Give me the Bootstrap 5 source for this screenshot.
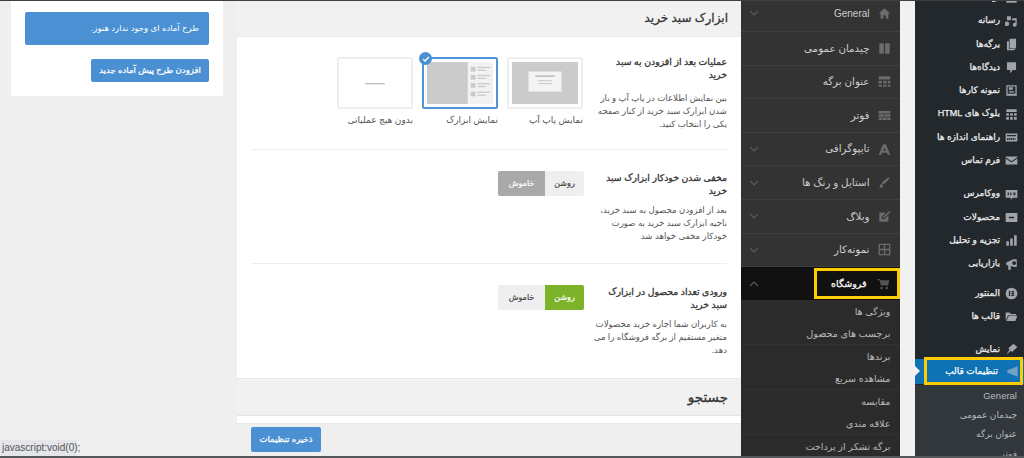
<!DOCTYPE html>
<html lang="fa" dir="rtl">
<head>
<meta charset="utf-8">
<title>تنظیمات قالب</title>
<link href="https://cdn.jsdelivr.net/npm/bootstrap@5.3.0/dist/css/bootstrap.min.css" rel="stylesheet">
<style>
html,body{height:458px;overflow:hidden}
body{font-family:"Liberation Sans","DejaVu Sans",sans-serif;background:#3c4043;font-size:10px;color:#555;position:relative}
.shell{height:455px;margin-top:1px;overflow:hidden}
.adm{width:109px;background:#23282d;flex:none;height:455px;overflow:hidden}
.adm-i{height:23.3px;padding-right:6px;gap:5px;color:#eee;font-size:9px;-webkit-text-stroke:.25px #eee;white-space:nowrap}
.adm-i svg{width:13px;height:13px;flex:none;fill:#a0a5aa}
.adm-cut{height:8.4px;overflow:hidden;padding-bottom:5px;color:#ccc}
.tight{height:22px}
.g1{margin-top:10px}.g2{margin-top:7px}.g3{margin-top:10px}
.adm-cur{height:28px;background:linear-gradient(#23282d 2px,#0e72b5 2px,#0e72b5 27px,#23282d 27px);position:relative;margin-top:-4.7px}
.adm-box{margin:0 1px 0 9px;width:99px;height:28px;border:3px solid #fc0;padding:2px 1px 0 0;gap:8px;color:#fff;font-size:9px;-webkit-text-stroke:.25px #fff;white-space:nowrap}
.adm-box svg{width:13px;height:13px;fill:#6fa3c5;flex:none}
.adm-arrow{position:absolute;left:0;top:9px;width:0;height:0;border-left:5px solid #f1f1f1;border-top:5px solid transparent;border-bottom:5px solid transparent}
.adm-sub{background:#32373c;padding-right:7px;color:#b4b9be;font-size:9px}
.adm-sub div{height:19.5px;line-height:19.5px;white-space:nowrap}
.adm-sub .en{font-size:9.5px;height:21px;line-height:21px}
.gapcol{width:15.5px;flex:none;background:#f1f1f1}
.opt{width:158.5px;flex:none;background:#333;height:455px;overflow:hidden}
.opt-i{height:33.6px;border-bottom:1px solid #3e3e3e;padding:0 9px;color:#ccc;font-size:10.3px;white-space:nowrap;gap:8px}
.opt-i.first{height:31px;padding-bottom:6px}
.opt-i svg{width:13px;height:13px;fill:#6b6b6b;flex:none}
.opt-en{font-size:10px}
.chev{margin-right:auto;width:8px!important;height:6px!important;fill:none!important;stroke:#5c5c5c;stroke-width:1.2}
.opt-act{height:33px;background:#111;padding:0 0 0 9px;color:#fff;font-size:9.5px;-webkit-text-stroke:.25px #fff}
.opt-box{width:86px;height:31px;border:3px solid #fc0;padding-right:7px;gap:10px;white-space:nowrap;background:#111}
.opt-box svg{width:13px;height:13px;fill:#555;flex:none}
.opt-sub{background:#2b2b2b;color:#b9b9b9;font-size:9.6px;height:23px;line-height:23px;padding-right:9px;border-bottom:1px solid #333;white-space:nowrap;margin-top:-.5px}
.mid{width:504px;flex:none;background:#f1f1f1;height:455px;overflow:hidden}
.h-tl{height:36px;padding:0 13px;font-size:12px;-webkit-text-stroke:.3px #333;color:#333;line-height:35px;border-bottom:1px solid #eaeaea}
.sheet{background:#fff}
.setrow{margin:0 14px;border-bottom:1px solid #eee;height:114px;padding-top:22px;gap:26px}
.setrow.r1{height:113px;padding-top:19px}
.setrow.r1 .ttl{margin-bottom:11px}
.setrow.r3{border:0}
.tcol{width:117px;flex:none}
.ttl{font-size:9.3px;-webkit-text-stroke:.3px #333;color:#333;line-height:12.5px;margin-bottom:7px;white-space:nowrap}
.dsc{font-size:8.6px;line-height:13px;color:#555;white-space:nowrap}
.picks{gap:9px;margin:1px 1px 0 0}
.pick{width:76px;color:#555;font-size:9px;white-space:nowrap}
.pth{height:52px;border:2px solid #eee;border-radius:2px;padding:3px;position:relative;margin-bottom:5px;background:#fff}
.pth.on{border-color:#4f94d4}
.pth svg{display:block;width:100%;height:100%}
.tick{position:absolute;top:-7px;left:-5px;width:13px;height:13px;border-radius:50%;background:#4a90d2;display:flex;align-items:center;justify-content:center}
.tick svg{width:8px;height:8px}
.tog{width:86px;height:25px;border-radius:2px;overflow:hidden;background:#efefef;font-size:8px;-webkit-text-stroke:.2px;color:#444;margin-top:-1px}
.tog span{display:flex;align-items:center;justify-content:center;height:100%}
.tog .s1{width:39px}.tog .s2{width:47px}
.tog .off{background:#a9a9a9;color:#fff}
.tog .grn{background:#7cb32b;color:#fff}
.srch{height:38px;line-height:37px;padding:0 13px;font-size:13.5px;-webkit-text-stroke:.3px #333;color:#333;border-top:1px solid #e8e8e8;border-bottom:1px solid #e5e5e5}
.strip{height:7px;background:#fff}
.foot{height:34px;background:#efefef;padding:3px 14px 0;border-top:1px solid #e7e7e7}
.bluebtn{background:#4a90d2;border:0;color:#fff;-webkit-text-stroke:.25px #fff;border-radius:2px;font-size:8.5px;padding:0;line-height:1;display:flex;align-items:center;justify-content:center;white-space:nowrap}
.bluebtn:hover{background:#4a90d2;color:#fff}
.sv{width:70px;height:25px}
.lft{width:237px;flex:none;background:#efefef;height:455px}
.lcard{background:#fff;height:95px;width:212px;padding:11px 14px 0;margin-right:14px}
.lnote{background:#4a90d2;color:#fff;height:33px;border-radius:2px;padding:0 10px;font-size:8.5px;line-height:33px;white-space:nowrap}
.ladd{width:118px;height:23px;margin-top:14px}
.stat{position:absolute;left:0;bottom:2px;height:16px;width:77px;background:#e4e6e9;border-top-right-radius:3px;font:10px/16px "Liberation Sans",sans-serif;color:#555;padding-left:2px;direction:ltr;white-space:nowrap}
.lowbar{position:absolute;left:0;right:0;bottom:0;height:2px;background:#55585a}
</style>
</head>
<body>
<div class="shell d-flex">
  <nav class="adm">
    <div class="adm-i adm-cut d-flex align-items-end"><svg viewBox="0 0 20 20"><rect x="2" y="4" width="16" height="14"/></svg><span>نوشته‌ها</span></div>
    <div class="adm-i d-flex align-items-center"><svg viewBox="0 0 20 20"><path d="M3 2h6v6H3zM3 10a3 3 0 1 1 0 7 3 3 0 0 1 0-7zM11 5h7v10a3 3 0 1 1-3-3h1V8h-5z"/></svg><span>رسانه</span></div>
    <div class="adm-i d-flex align-items-center"><svg viewBox="0 0 20 20"><path d="M7 1h10v15H7zM3 5h3v12h9v2H3z"/></svg><span>برگه‌ها</span></div>
    <div class="adm-i d-flex align-items-center"><svg viewBox="0 0 20 20"><path d="M3 2h14v12h-5l-4 5v-5H3z"/></svg><span>دیدگاه‌ها</span></div>
    <div class="adm-i d-flex align-items-center"><svg viewBox="0 0 20 20"><path fill-rule="evenodd" d="M2 2h16v16H2zM4 4v11h12V4zM6 5h6v4H6zM6 11h8v2H6z"/></svg><span>نمونه کارها</span></div>
    <div class="adm-i d-flex align-items-center"><svg viewBox="0 0 20 20"><path d="M2 2h16v4H2zM2 8h4v4H2zM8 8h4v4H8zM14 8h4v4h-4zM2 14h4v4H2zM8 14h4v4H8zM14 14h4v4h-4z"/></svg><span>بلوک های HTML</span></div>
    <div class="adm-i d-flex align-items-center"><svg viewBox="0 0 20 20"><path fill-rule="evenodd" d="M1 4h18v12H1zM3 6v2h14V6zM3 11v3h2v-2h1v2h2v-2h1v2h2v-2h1v2h2v-2h1v2h1v-3z"/></svg><span>راهنمای اندازه ها</span></div>
    <div class="adm-i d-flex align-items-center"><svg viewBox="0 0 20 20"><path d="M1 4h18v1l-9 6-9-6zM1 7l9 6 9-6v9H1z"/></svg><span>فرم تماس</span></div>
    <div class="adm-i g1 d-flex align-items-center"><svg viewBox="0 0 20 20"><path fill-rule="evenodd" d="M1 3h18v12h-7l-3 3v-3H1zM4 7v4h2V7zM8 7v4h2V7zM13 7v4h3V7z"/></svg><span>ووکامرس</span></div>
    <div class="adm-i d-flex align-items-center"><svg viewBox="0 0 20 20"><path fill-rule="evenodd" d="M1 3h18v14H1zM6 9v2h8V9z"/></svg><span>محصولات</span></div>
    <div class="adm-i d-flex align-items-center"><svg viewBox="0 0 20 20"><path d="M2 11h4v7H2zM8 7h4v11H8zM14 2h4v16h-4z"/></svg><span>تجزیه و تحلیل</span></div>
    <div class="adm-i d-flex align-items-center"><svg viewBox="0 0 20 20"><path fill-rule="evenodd" d="M2 7l11-5h5v12h-5l-4-2v6H5v-7H2zM13 5a3 3 0 1 0 2 0z"/></svg><span>بازاریابی</span></div>
    <div class="adm-i tight g2 d-flex align-items-center"><svg viewBox="0 0 20 20"><path fill-rule="evenodd" d="M10 1a9 9 0 1 1 0 18 9 9 0 0 1 0-18zM6 6v8h2V6zM10 6v2h4V6zM10 9v2h4V9zM10 12v2h4v-2z"/></svg><span>المنتور</span></div>
    <div class="adm-i d-flex align-items-center"><svg viewBox="0 0 20 20"><path d="M1 4h6l2 2h8v2H5l-4 8zM6 9h13l-3 8H2z"/></svg><span>قالب ها</span></div>
    <div class="adm-i g3 d-flex align-items-center"><svg viewBox="0 0 20 20"><path d="M13 1l6 5-8 8-2-2-7 6 5-8-2-2z"/></svg><span>نمایش</span></div>
    <div class="adm-cur"><i class="adm-arrow"></i>
      <div class="adm-box d-flex align-items-center"><svg viewBox="0 0 20 20"><path d="M2 8l16-6v16L2 12z"/></svg><span>تنظیمات قالب</span></div>
    </div>
    <div class="adm-sub">
      <div class="en">General</div>
      <div>چیدمان عمومی</div>
      <div>عنوان برگه</div>
      <div>فوتر</div>
    </div>
  </nav>
  <div class="gapcol"></div>
  <aside class="opt">
    <div class="opt-i first d-flex align-items-center"><svg viewBox="0 0 20 20"><path d="M10 2l9 8h-3v8h-4v-5H8v5H4v-8H1z"/></svg><span class="opt-en">General</span><svg class="chev" viewBox="0 0 8 6"><path d="M0 1l4 4 4-4"/></svg></div>
    <div class="opt-i d-flex align-items-center"><svg viewBox="0 0 20 20"><path d="M2 2h7v16H2zM11 2h7v16h-7z"/></svg><span>چیدمان عمومی</span></div>
    <div class="opt-i d-flex align-items-center"><svg viewBox="0 0 20 20"><path d="M1 2h18v5H1zM1 9h5v4H1zM8 9h5v4H8zM15 9h4v4h-4zM1 15h5v3H1zM8 15h5v3H8zM15 15h4v3h-4z"/></svg><span>عنوان برگه</span></div>
    <div class="opt-i d-flex align-items-center"><svg viewBox="0 0 20 20"><path d="M1 3h18v4H1zM1 8h8v4H1zM10 8h9v4h-9zM1 13h5v4H1zM7 13h6v4H7zM14 13h5v4h-5z"/></svg><span>فوتر</span></div>
    <div class="opt-i d-flex align-items-center"><svg viewBox="0 0 20 20"><path fill-rule="evenodd" d="M8 2h4l7 16h-4l-1-3H6l-1 3H1zM10 7l-2 5h4z"/></svg><span>تایپوگرافی</span><svg class="chev" viewBox="0 0 8 6"><path d="M0 1l4 4 4-4"/></svg></div>
    <div class="opt-i d-flex align-items-center"><svg viewBox="0 0 20 20"><path d="M18 2c-1 4-6 9-10 11l-2-2c2-4 8-8 12-9zM5 12l3 3c-1 3-4 3-6 3 1-1 1-5 3-6z"/></svg><span>استایل و رنگ ها</span><svg class="chev" viewBox="0 0 8 6"><path d="M0 1l4 4 4-4"/></svg></div>
    <div class="opt-i d-flex align-items-center"><svg viewBox="0 0 20 20"><path d="M2 4h10l-6 6v4h4l6-6v10H2zM18 1l1 2-9 9H8v-2z"/></svg><span>وبلاگ</span><svg class="chev" viewBox="0 0 8 6"><path d="M0 1l4 4 4-4"/></svg></div>
    <div class="opt-i d-flex align-items-center"><svg viewBox="0 0 20 20"><path fill-rule="evenodd" d="M1 1h18v18H1zM3 3v6h6V3zM11 3v6h6V3zM3 11v6h6v-6zM11 11v6h6v-6z"/></svg><span>نمونه‌کار</span><svg class="chev" viewBox="0 0 8 6"><path d="M0 1l4 4 4-4"/></svg></div>
    <div class="opt-act d-flex align-items-center">
      <div class="opt-box d-flex align-items-center"><svg viewBox="0 0 20 20"><path d="M1 3h3l1 2h14l-2 8H6L4 5H1zM7 15a2 2 0 1 1 0 4 2 2 0 0 1 0-4zM15 15a2 2 0 1 1 0 4 2 2 0 0 1 0-4z"/></svg><span>فروشگاه</span></div>
      <svg class="chev" viewBox="0 0 8 6"><path d="M0 5l4-4 4 4"/></svg>
    </div>
    <div class="opt-sub">ویژگی ها</div>
    <div class="opt-sub">برچسب های محصول</div>
    <div class="opt-sub">برندها</div>
    <div class="opt-sub">مشاهده سریع</div>
    <div class="opt-sub">مقایسه</div>
    <div class="opt-sub">علاقه مندی</div>
    <div class="opt-sub">برگه تشکر از پرداخت</div>
  </aside>
  <main class="mid">
    <div class="h-tl">ابزارک سبد خرید</div>
    <div class="sheet">
      <div class="setrow r1 d-flex">
        <div class="tcol">
          <div class="ttl">عملیات بعد از افزودن به سبد<br>خرید</div>
          <div class="dsc">بین نمایش اطلاعات در پاپ آپ و باز<br>شدن ابزارک سبد خرید از کنار صفحه<br>یکی را انتخاب کنید.</div>
        </div>
        <div class="picks d-flex">
          <div class="pick"><div class="pth"><svg viewBox="0 0 68 44" preserveAspectRatio="none"><rect width="68" height="44" fill="#cbcbcb"/><rect x="17" y="10" width="34" height="21" fill="#f4f4f4"/><rect x="24" y="14" width="20" height="1.6" fill="#bbb"/><rect x="27" y="19" width="14" height="1.2" fill="#ccc"/><rect x="27" y="22" width="14" height="1.2" fill="#ccc"/></svg></div>نمایش پاپ آپ</div>
          <div class="pick"><div class="pth on"><svg viewBox="0 0 68 44" preserveAspectRatio="none"><rect width="68" height="44" fill="#f2f2f2"/><rect width="42" height="44" fill="#cbcbcb"/><g fill="#cbcbcb"><rect x="45" y="5" width="5" height="5"/><rect x="52" y="5" width="13" height="1.4"/><rect x="52" y="8" width="9" height="1.4"/><rect x="45" y="13.5" width="5" height="5"/><rect x="52" y="13.5" width="13" height="1.4"/><rect x="52" y="16.5" width="9" height="1.4"/><rect x="45" y="22" width="5" height="5"/><rect x="52" y="22" width="13" height="1.4"/><rect x="52" y="25" width="9" height="1.4"/><rect x="45" y="31" width="5" height="5"/><rect x="52" y="31" width="13" height="1.4"/><rect x="52" y="34" width="9" height="1.4"/></g></svg><span class="tick"><svg viewBox="0 0 10 10"><path d="M1.5 5.2l2.4 2.4 4.6-5" fill="none" stroke="#fff" stroke-width="1.8"/></svg></span></div>نمایش ابزارک</div>
          <div class="pick"><div class="pth"><svg viewBox="0 0 68 44" preserveAspectRatio="none"><rect x="24" y="22" width="20" height="1.4" fill="#bbb"/></svg></div>بدون هیچ عملیاتی</div>
        </div>
      </div>
      <div class="setrow d-flex">
        <div class="tcol">
          <div class="ttl">مخفی شدن خودکار ابزارک سبد<br>خرید</div>
          <div class="dsc">بعد از افزودن محصول به سبد خرید،<br>ناحیه ابزارک سبد خرید به صورت<br>خودکار مخفی خواهد شد</div>
        </div>
        <div class="tog d-flex"><span class="s1">روشن</span><span class="s2 off">خاموش</span></div>
      </div>
      <div class="setrow r3 d-flex">
        <div class="tcol">
          <div class="ttl">ورودی تعداد محصول در ابزارک<br>سبد خرید</div>
          <div class="dsc">به کاربران شما اجازه خرید محصولات<br>متغیر مستقیم از برگه فروشگاه را می<br>دهد.</div>
        </div>
        <div class="tog d-flex"><span class="s1 grn">روشن</span><span class="s2">خاموش</span></div>
      </div>
    </div>
    <div class="srch">جستجو</div>
    <div class="strip"></div>
    <div class="foot d-flex justify-content-end"><button class="btn bluebtn sv" type="button">ذخیره تنظیمات</button></div>
  </main>
  <section class="lft">
    <div class="lcard">
      <div class="lnote">طرح آماده ای وجود ندارد هنوز.</div>
      <button class="btn bluebtn ladd" type="button">افزودن طرح پیش آماده جدید</button>
    </div>
  </section>
</div>
<div class="stat">javascript:void(0);</div>
<div class="lowbar"></div>
<script src="https://cdn.jsdelivr.net/npm/bootstrap@5.3.0/dist/js/bootstrap.bundle.min.js"></script>
</body>
</html>
